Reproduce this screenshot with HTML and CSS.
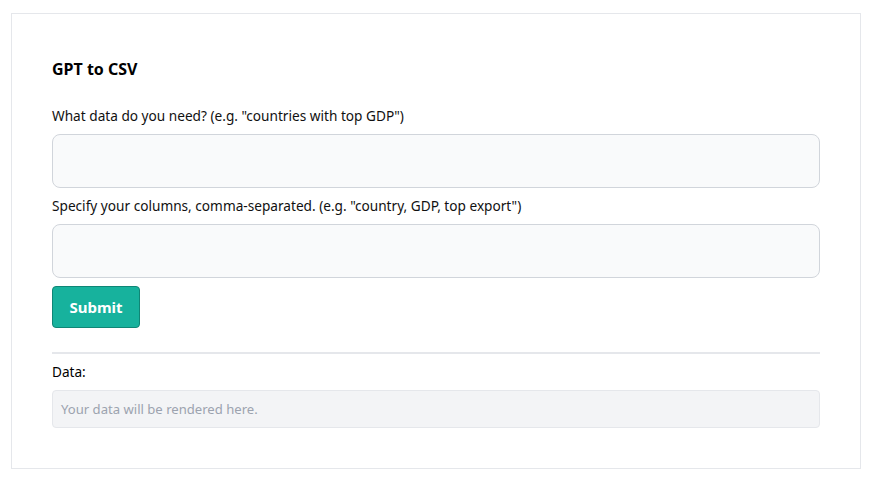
FILE: index.html
```html
<!DOCTYPE html>
<html>
<head>
<meta charset="utf-8">
<link rel="stylesheet" href="styles.css">
</head>
<body>
<div class="card">
  <h1 class="title">GPT to CSV</h1>
  <label class="label lbl-first">What data do you need? (e.g. "countries with top GDP")</label>
  <textarea class="field"></textarea>
  <label class="label">Specify your columns, comma-separated. (e.g. "country, GDP, top export")</label>
  <textarea class="field"></textarea>
  <button class="submit">Submit</button>
  <hr class="divider">
  <div class="data-label">Data:</div>
  <div class="output">Your data will be rendered here.</div>
</div>
</body>
</html>
```
FILE: styles.css
```css
html, body { margin: 0; padding: 0; background: #fff; }
body { padding: 13px 11px; font-family: "Noto Sans", "Open Sans", sans-serif; color: #111827; }
.card {
  width: 850px;
  height: 456px;
  box-sizing: border-box;
  border: 1px solid #e5e7eb;
  padding: 44px 40px 0 40px;
  display: flex;
  flex-direction: column;
}
.title { margin: 0; font-size: 16px; font-weight: 700; line-height: 22px; color: #000; }
.label { display: block; font-size: 13.65px; line-height: 18px; margin: 9px 0 9px; color: #111; }
.lbl-first { margin-top: 27px; }
.field {
  display: block;
  width: 768px;
  height: 54px;
  box-sizing: border-box;
  border: 1px solid #d1d5db;
  border-radius: 8px;
  background: #f9fafb;
  resize: none;
  margin: 0;
}
.submit {
  margin-top: 8px;
  width: 88px;
  height: 42px;
  background: #17b29d;
  border: 1px solid #0f8676;
  border-radius: 4px;
  color: #fff;
  font-family: "Noto Sans", sans-serif;
  font-weight: 700;
  font-size: 15px;
  padding: 0;
}
.divider { margin: 24px 0 0; border: 0; height: 2px; background: #e5e7eb; width: 768px; }
.data-label { font-size: 13.6px; font-weight: 400; line-height: 18px; margin: 9px 0 9px; color: #000; }
.output {
  width: 768px;
  height: 38px;
  box-sizing: border-box;
  background: #f3f4f6;
  border: 1px solid #e5e7eb;
  border-radius: 4px;
  color: #9ca3af;
  font-size: 13.1px;
  line-height: 36px;
  padding-left: 8px;
}
```
